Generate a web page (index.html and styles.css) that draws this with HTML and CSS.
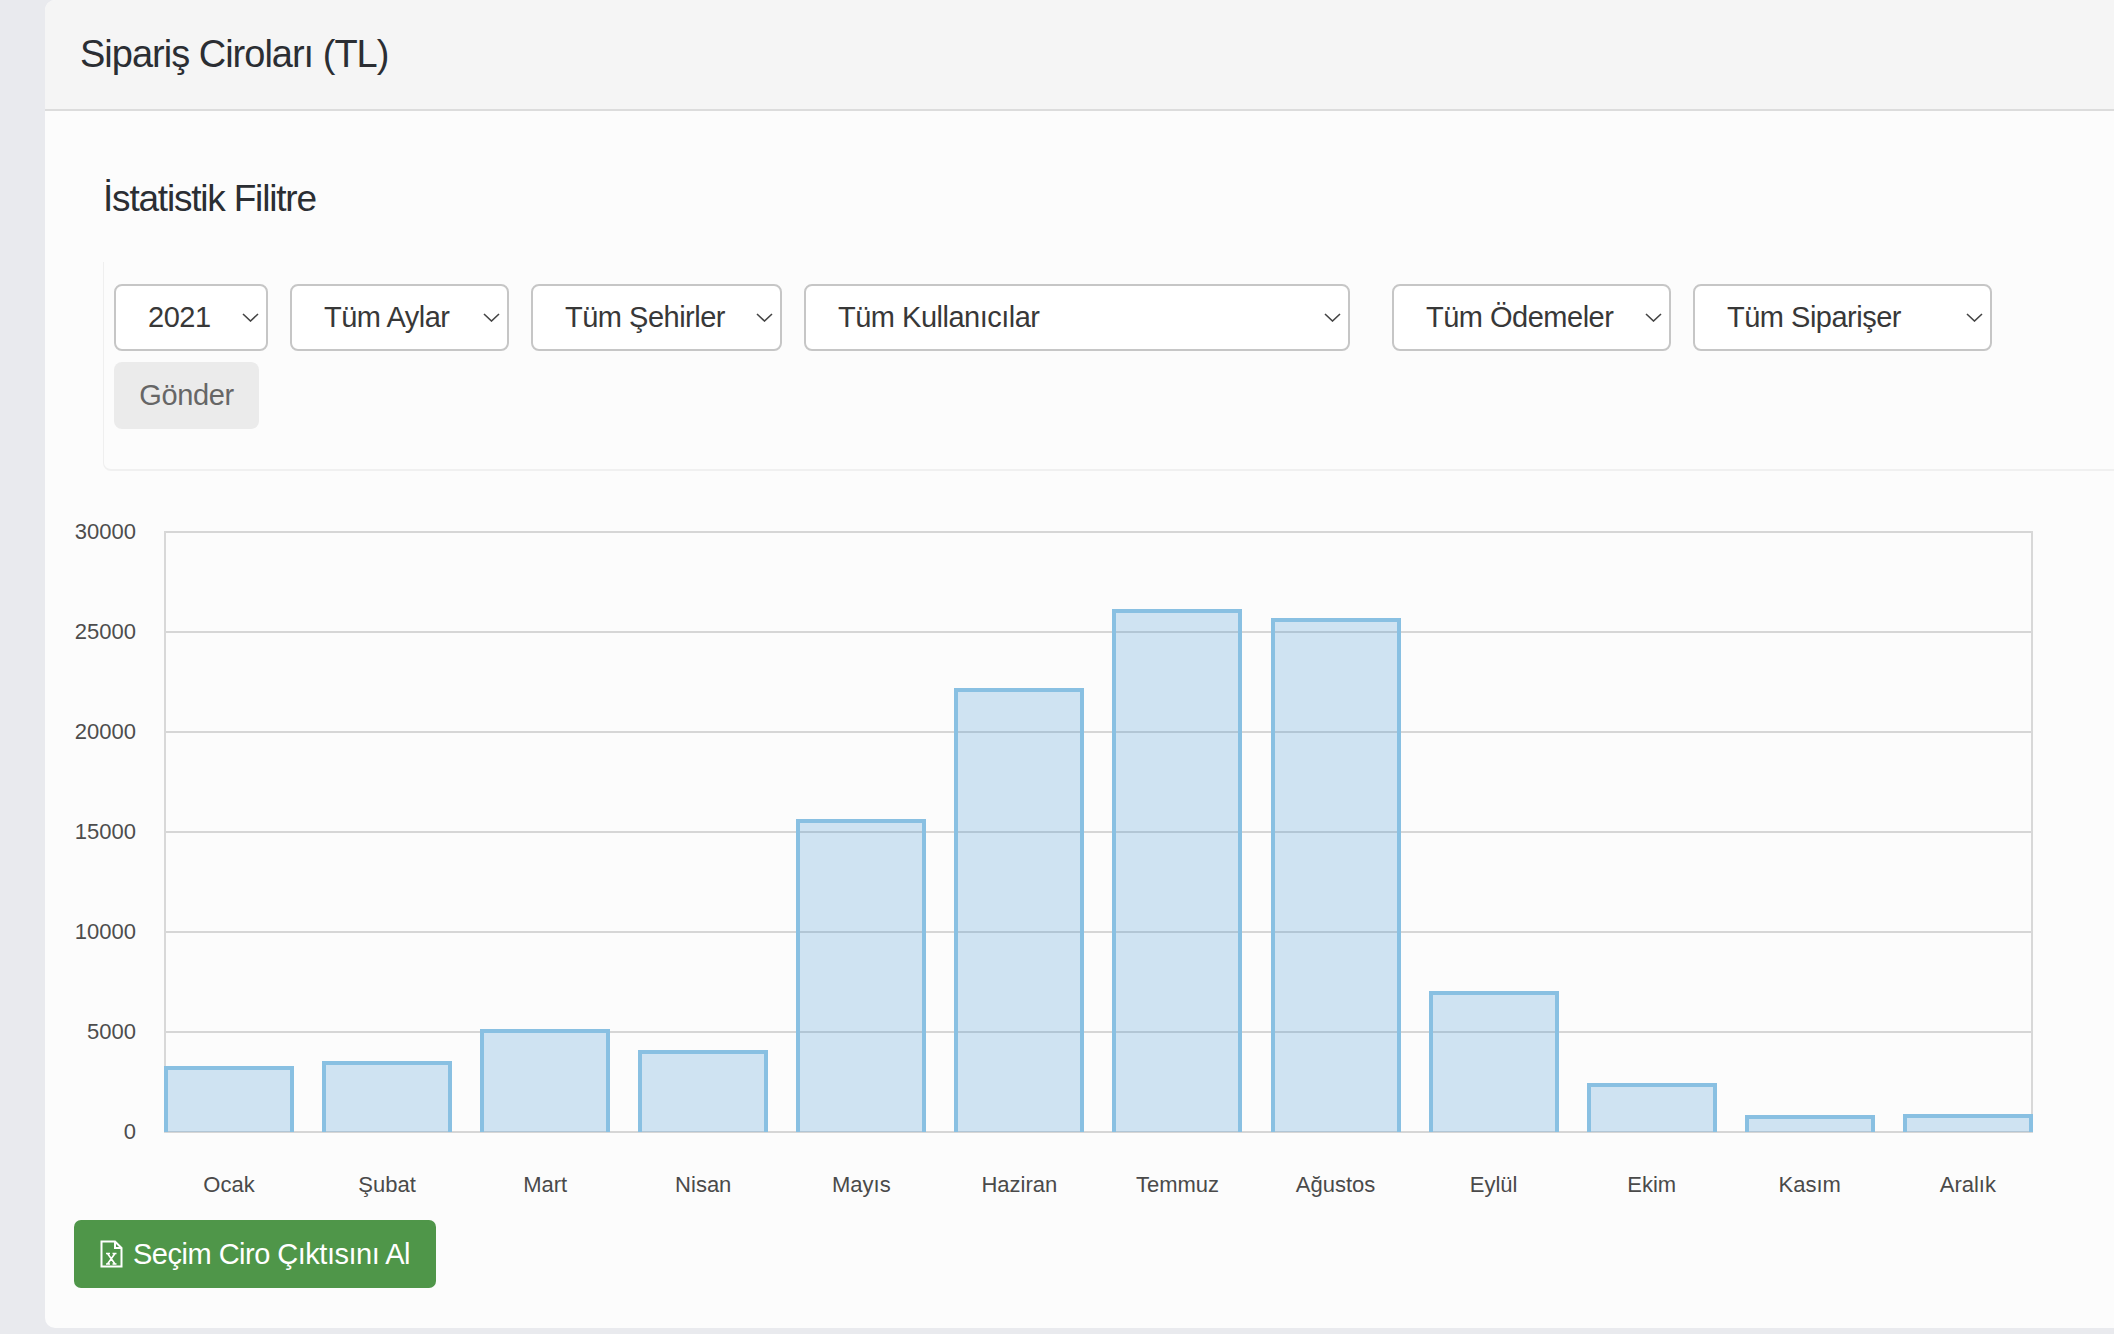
FILE: index.html
```html
<!DOCTYPE html>
<html lang="tr">
<head>
<meta charset="utf-8">
<title>Sipariş Ciroları (TL)</title>
<link rel="stylesheet" href="styles.css">
</head>
<body>
<div class="card">
  <div class="card-header">
    <h1 class="card-title">Sipariş Ciroları (TL)</h1>
  </div>
  <div class="card-body">
    <section class="filter">
      <h2 class="filter-title">İstatistik Filitre</h2>
      <div class="filter-panel">
        <div class="filter-row">
          <div class="select w-year"><span>2021</span><svg class="chev" viewBox="0 0 17 9"><path d="M1 1 L8.5 8 L16 1"/></svg></div>
          <div class="select w-month"><span>Tüm Aylar</span><svg class="chev" viewBox="0 0 17 9"><path d="M1 1 L8.5 8 L16 1"/></svg></div>
          <div class="select w-city"><span>Tüm Şehirler</span><svg class="chev" viewBox="0 0 17 9"><path d="M1 1 L8.5 8 L16 1"/></svg></div>
          <div class="select w-user"><span>Tüm Kullanıcılar</span><svg class="chev" viewBox="0 0 17 9"><path d="M1 1 L8.5 8 L16 1"/></svg></div>
          <div class="select w-pay"><span>Tüm Ödemeler</span><svg class="chev" viewBox="0 0 17 9"><path d="M1 1 L8.5 8 L16 1"/></svg></div>
          <div class="select w-order"><span>Tüm Siparişer</span><svg class="chev" viewBox="0 0 17 9"><path d="M1 1 L8.5 8 L16 1"/></svg></div>
        </div>
        <button class="btn-send" type="button">Gönder</button>
      </div>
    </section>

    <section class="chart">
      <div class="chart-main">
        <div class="y-axis">
          <span>30000</span><span>25000</span><span>20000</span><span>15000</span><span>10000</span><span>5000</span><span>0</span>
        </div>
        <div class="plot-wrap">
          <div class="plot">
            <div class="bar" style="height:66px"></div>
            <div class="bar" style="height:71px"></div>
            <div class="bar" style="height:103px"></div>
            <div class="bar" style="height:82px"></div>
            <div class="bar" style="height:313px"></div>
            <div class="bar" style="height:444px"></div>
            <div class="bar" style="height:523px"></div>
            <div class="bar" style="height:514px"></div>
            <div class="bar" style="height:141px"></div>
            <div class="bar" style="height:49px"></div>
            <div class="bar" style="height:17px"></div>
            <div class="bar" style="height:18px"></div>
          </div>
          <div class="x-axis">
            <span>Ocak</span><span>Şubat</span><span>Mart</span><span>Nisan</span><span>Mayıs</span><span>Haziran</span><span>Temmuz</span><span>Ağustos</span><span>Eylül</span><span>Ekim</span><span>Kasım</span><span>Aralık</span>
          </div>
        </div>
      </div>
    </section>

    <button class="btn-excel" type="button">
      <svg class="xls-icon" viewBox="0 0 23 28" aria-hidden="true">
        <path class="outline" d="M1.5 1.5 H15 L21.5 8 V26.5 H1.5 Z"/>
        <path class="outline" d="M15 1.5 V8 H21.5"/>
        <path class="xmark" d="M7.5 13.5 L15 24 M15 13.5 L7.5 24 M6 13.5 H10 M12.5 13.5 H16.5 M6 24 H10 M12.5 24 H16.5"/>
      </svg>
      <span>Seçim Ciro Çıktısını Al</span>
    </button>
  </div>
</div>
</body>
</html>
```
FILE: styles.css
```css
html, body {
  margin: 0;
  padding: 0;
}
body {
  background: #e9eaee;
  font-family: "Liberation Sans", Arial, Helvetica, sans-serif;
  overflow: hidden;
  width: 2114px;
  height: 1334px;
}
.card {
  margin-left: 45px;
  width: 2069px;
  background: #fcfcfc;
  border-radius: 10px 0 0 10px;
  overflow: hidden;
}
.card-header {
  height: 109px;
  background: #f5f5f5;
  border-bottom: 2px solid #dcdcdc;
  box-sizing: content-box;
  padding: 0 0 0 35px;
}
.card-title {
  margin: 0;
  padding-top: 35px;
  font-size: 38px;
  line-height: 38px;
  font-weight: normal;
  letter-spacing: -1px;
  color: #2b2e33;
}
.card-body {
  padding: 0 0 40px 29px;
}
.filter {
  margin-left: 29px;
}
.filter-title {
  margin: 68px 0 0 0;
  font-size: 37px;
  line-height: 39px;
  font-weight: normal;
  letter-spacing: -1.2px;
  color: #2b2e33;
}
.filter-panel {
  margin-top: 44px;
  border-left: 1px solid #efefef;
  border-bottom: 2px solid #f0f0f0;
  border-bottom-left-radius: 8px;
  padding: 22px 0 40px 10px;
}
.filter-row {
  display: flex;
  column-gap: 22px;
}
.select {
  box-sizing: border-box;
  height: 67px;
  display: flex;
  align-items: center;
  justify-content: space-between;
  padding: 0 7px 0 32px;
  background: #ffffff;
  border: 2px solid #c6c6c6;
  border-radius: 8px;
  font-size: 29px;
  color: #383838;
  letter-spacing: -0.5px;
}
.chev {
  width: 17px;
  height: 9px;
  fill: none;
  stroke: #444;
  stroke-width: 1.6;
}
.w-year { width: 154px; }
.w-month { width: 219px; }
.w-city { width: 251px; }
.w-user { width: 546px; }
.w-pay { width: 279px; margin-left: 20px; }
.w-order { width: 299px; }
.btn-send {
  display: block;
  margin-top: 11px;
  width: 145px;
  height: 67px;
  border: none;
  border-radius: 8px;
  background: #ebebeb;
  color: #666;
  font-family: inherit;
  font-size: 29px;
  letter-spacing: -0.4px;
  padding: 0;
}
.chart {
  margin-top: 60px;
}
.chart-main {
  display: flex;
  column-gap: 28px;
}
.y-axis {
  width: 62px;
  height: 624px;
  margin-top: -11px;
  display: flex;
  flex-direction: column;
  justify-content: space-between;
  align-items: flex-end;
  font-size: 22px;
  line-height: 24px;
  color: #4d4d4d;
}
.plot-wrap {
  width: 1869px;
}
.plot {
  box-sizing: border-box;
  height: 602px;
  padding-bottom: 1px;
  display: flex;
  justify-content: space-between;
  align-items: flex-end;
  background:
    linear-gradient(to right, #d8d8d8 0 2px, transparent 2px calc(100% - 2px), #d8d8d8 calc(100% - 2px) 100%),
    repeating-linear-gradient(to bottom, #d6d6d6 0 2px, transparent 2px 100px);
}
.bar {
  box-sizing: border-box;
  width: 130px;
  background: rgba(72, 152, 212, 0.25);
  border: 4px solid #89c0e2;
  border-bottom: none;
}
.x-axis {
  display: flex;
  justify-content: space-between;
  margin-top: 39px;
  font-size: 22px;
  line-height: 26px;
  color: #4a4a4a;
}
.x-axis span {
  width: 130px;
  text-align: center;
}
.btn-excel {
  margin-top: 22px;
  height: 68px;
  width: 362px;
  display: flex;
  align-items: center;
  column-gap: 10px;
  padding: 0 0 0 26px;
  border: none;
  border-radius: 7px;
  background: #4f9649;
  color: #ffffff;
  font-family: inherit;
  font-size: 29px;
  letter-spacing: -0.5px;
}
.xls-icon {
  width: 23px;
  height: 28px;
  flex: none;
}
.xls-icon .outline {
  fill: none;
  stroke: #ffffff;
  stroke-width: 2;
  stroke-linejoin: miter;
}
.xls-icon .xmark {
  fill: none;
  stroke: #ffffff;
  stroke-width: 1.6;
}
```
